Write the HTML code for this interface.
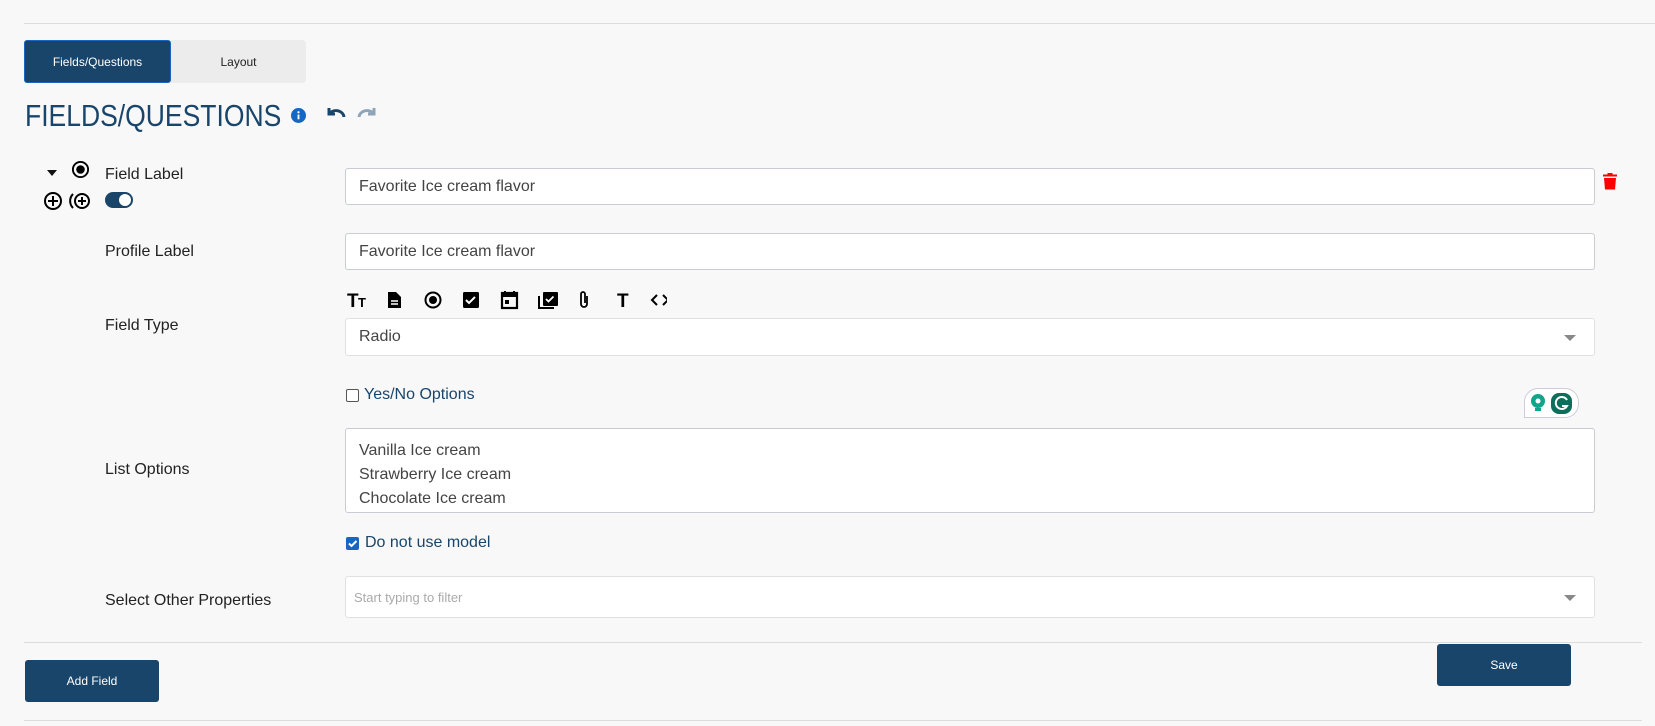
<!DOCTYPE html>
<html><head><meta charset="utf-8"><style>
*{box-sizing:border-box;margin:0;padding:0}
body{width:1655px;height:726px;background:#f8f8f8;font-family:"Liberation Sans",sans-serif;color:#222;position:relative;overflow:hidden}
.a{position:absolute}
.line{position:absolute;height:1px;background:#dcdcdc}
.inp{position:absolute;left:345px;width:1250px;background:#fff;border:1px solid #c9ccd3;border-radius:3px;font-size:16px;color:#444;padding-left:13px;display:flex;align-items:center}
.lbl{position:absolute;left:105px;font-size:16px;color:#222}
.btn{position:absolute;background:#19456b;color:#fff;font-size:12px;display:flex;align-items:center;justify-content:center;border-radius:3px}
.caret{position:absolute;right:18px;top:50%;margin-top:-2px;border-left:6px solid transparent;border-right:6px solid transparent;border-top:6px solid #888}
</style></head><body>
<div class="line" style="left:24px;right:0;top:23px"></div>
<div class="btn" style="left:24px;top:40px;width:147px;height:43px;border:1px solid #1766c2">Fields/Questions</div>
<div class="a" style="left:171px;top:40px;width:135px;height:43px;background:#ececec;border-radius:0 4px 4px 0;font-size:12px;display:flex;align-items:center;justify-content:center">Layout</div>
<div class="a" style="left:25px;top:98px;font-size:31px;color:#19456b;transform:scaleX(0.855);transform-origin:0 0;white-space:nowrap">FIELDS/QUESTIONS</div>
<svg class="a" style="left:291px;top:108px" width="15" height="15" viewBox="0 0 16 16"><circle cx="8" cy="8" r="8" fill="#1766c2"/><rect x="7" y="7" width="2" height="5" fill="#fff"/><circle cx="8" cy="4.5" r="1.2" fill="#fff"/></svg>
<svg class="a" style="left:325px;top:104px" width="22" height="18" viewBox="0 0 22 18"><path d="M4 4v6h6" fill="none" stroke="#19456b" stroke-width="3"/><path d="M5 9a8 7 0 0 1 14 4" fill="none" stroke="#19456b" stroke-width="3"/></svg>
<svg class="a" style="left:356px;top:104px" width="22" height="18" viewBox="0 0 22 18"><path d="M18 4v6h-6" fill="none" stroke="#8ea4b8" stroke-width="3"/><path d="M17 9a8 7 0 0 0 -14 4" fill="none" stroke="#8ea4b8" stroke-width="3"/></svg>
<div class="a" style="left:47px;top:170px;border-left:5px solid transparent;border-right:5px solid transparent;border-top:6px solid #111"></div>
<svg class="a" style="left:71px;top:160px" width="19" height="19" viewBox="0 0 20 20"><circle cx="10" cy="10" r="8" fill="none" stroke="#000" stroke-width="2"/><circle cx="10" cy="10" r="4.5"/></svg>
<div class="lbl" style="top:166px">Field Label</div>
<svg class="a" style="left:43px;top:191px" width="20" height="20" viewBox="0 0 20 20"><circle cx="10" cy="10" r="8" fill="none" stroke="#000" stroke-width="2"/><path d="M10 5v10M5 10h10" stroke="#000" stroke-width="2"/></svg>
<svg class="a" style="left:68px;top:191px" width="24" height="20" viewBox="0 0 24 20"><path d="M5 3a10 10 0 0 0 0 14" fill="none" stroke="#000" stroke-width="2"/><circle cx="14" cy="10" r="7" fill="none" stroke="#000" stroke-width="2"/><path d="M14 6v8M10 10h8" stroke="#000" stroke-width="2"/></svg>
<div class="a" style="left:105px;top:192px;width:28px;height:16px;border-radius:8px;background:#19456b"><div class="a" style="right:2px;top:2px;width:12px;height:12px;border-radius:50%;background:#fff"></div></div>
<div class="inp" style="top:168px;height:37px">Favorite Ice cream flavor</div>
<svg class="a" style="left:1603px;top:173px" width="14" height="17" viewBox="0 0 14 17"><rect x="0" y="1.5" width="14" height="2" fill="#f00"/><rect x="4.5" y="0" width="5" height="2" fill="#f00"/><path d="M1 5h12l-1 11.5H2z" fill="#f00"/></svg>
<div class="lbl" style="top:243px">Profile Label</div>
<div class="inp" style="top:233px;height:37px">Favorite Ice cream flavor</div>
<svg class="a" style="left:347px;top:289px" width="320" height="22" viewBox="0 0 320 22">
<text x="0" y="18" font-family="Liberation Sans" font-weight="bold" font-size="19">T</text><text x="11" y="18" font-family="Liberation Sans" font-weight="bold" font-size="13">T</text>
<path d="M41 3h8l5 5v11h-13z" fill="#000"/><path d="M44 12h7M44 15h7" stroke="#fff" stroke-width="1.4"/>
<circle cx="86" cy="11" r="7.5" fill="none" stroke="#000" stroke-width="2"/><circle cx="86" cy="11" r="4"/>
<rect x="116" y="3" width="16" height="16" rx="1.5"/><path d="M119 11l3 3 6-6" fill="none" stroke="#fff" stroke-width="2"/>
<rect x="155" y="4" width="15" height="15" fill="none" stroke="#000" stroke-width="2.2"/><rect x="155" y="4" width="15" height="4"/><rect x="158" y="11" width="4" height="4"/><path d="M158 2v3M167 2v3" stroke="#000" stroke-width="2"/>
<rect x="196" y="3" width="15" height="14" rx="1"/><path d="M192 7v12h15" fill="none" stroke="#000" stroke-width="2"/><path d="M199 10l2.5 2.5 5-5" fill="none" stroke="#fff" stroke-width="1.8"/>
<path d="M240 7v8a3 3 0 0 1-6 0V5a2 2 0 0 1 4 0v9" fill="none" stroke="#000" stroke-width="1.8"/>
<text x="270" y="18" font-family="Liberation Sans" font-weight="bold" font-size="19">T</text>
<path d="M310 6l-5 5 5 5M316 6l5 5-5 5" fill="none" stroke="#000" stroke-width="2"/>
</svg>
<div class="lbl" style="top:317px">Field Type</div>
<div class="inp" style="top:318px;height:38px;border-color:#e0e0e0">Radio<div class="caret"></div></div>
<div class="a" style="left:346px;top:389px;width:13px;height:13px;border:1px solid #555;border-radius:2px;background:#fff"></div>
<div class="a" style="left:364px;top:386px;font-size:16px;color:#19456b">Yes/No Options</div>
<div class="a" style="left:1524px;top:388px;width:55px;height:30px;border:1px solid #ccd;border-radius:14px 14px 14px 0;background:#fff"></div>
<svg class="a" style="left:1529px;top:392px" width="46" height="22" viewBox="0 0 46 22"><circle cx="9" cy="9" r="7" fill="#15a38b"/><rect x="6" y="16" width="6" height="3" fill="#15a38b"/><circle cx="9" cy="9" r="2.5" fill="#fff"/><rect x="22" y="1" width="21" height="21" rx="8" fill="#0f6d5c"/><path d="M38 8a6 6 0 1 0 0 6h-5" fill="none" stroke="#fff" stroke-width="2"/></svg>
<div class="lbl" style="top:461px">List Options</div>
<div class="inp" style="top:428px;height:85px;display:block;padding-top:10px;line-height:24px">Vanilla Ice cream<br>Strawberry Ice cream<br>Chocolate Ice cream</div>
<div class="a" style="left:346px;top:537px;width:13px;height:13px;border-radius:2px;background:#1766c2"><svg width="13" height="13" viewBox="0 0 13 13" style="display:block"><path d="M3 6.5l2.5 2.5 5-5" fill="none" stroke="#fff" stroke-width="2"/></svg></div>
<div class="a" style="left:365px;top:534px;font-size:16px;color:#19456b">Do not use model</div>
<div class="lbl" style="top:592px">Select Other Properties</div>
<div class="inp" style="top:576px;height:42px;border-color:#e0e0e0;font-size:13px;color:#aaa;padding-left:8px">Start typing to filter<div class="caret"></div></div>
<div class="line" style="left:24px;width:1618px;top:642px"></div>
<div class="btn" style="left:25px;top:660px;width:134px;height:42px">Add Field</div>
<div class="btn" style="left:1437px;top:644px;width:134px;height:42px">Save</div>
<div class="line" style="left:24px;width:1618px;top:720px"></div>
</body></html>
